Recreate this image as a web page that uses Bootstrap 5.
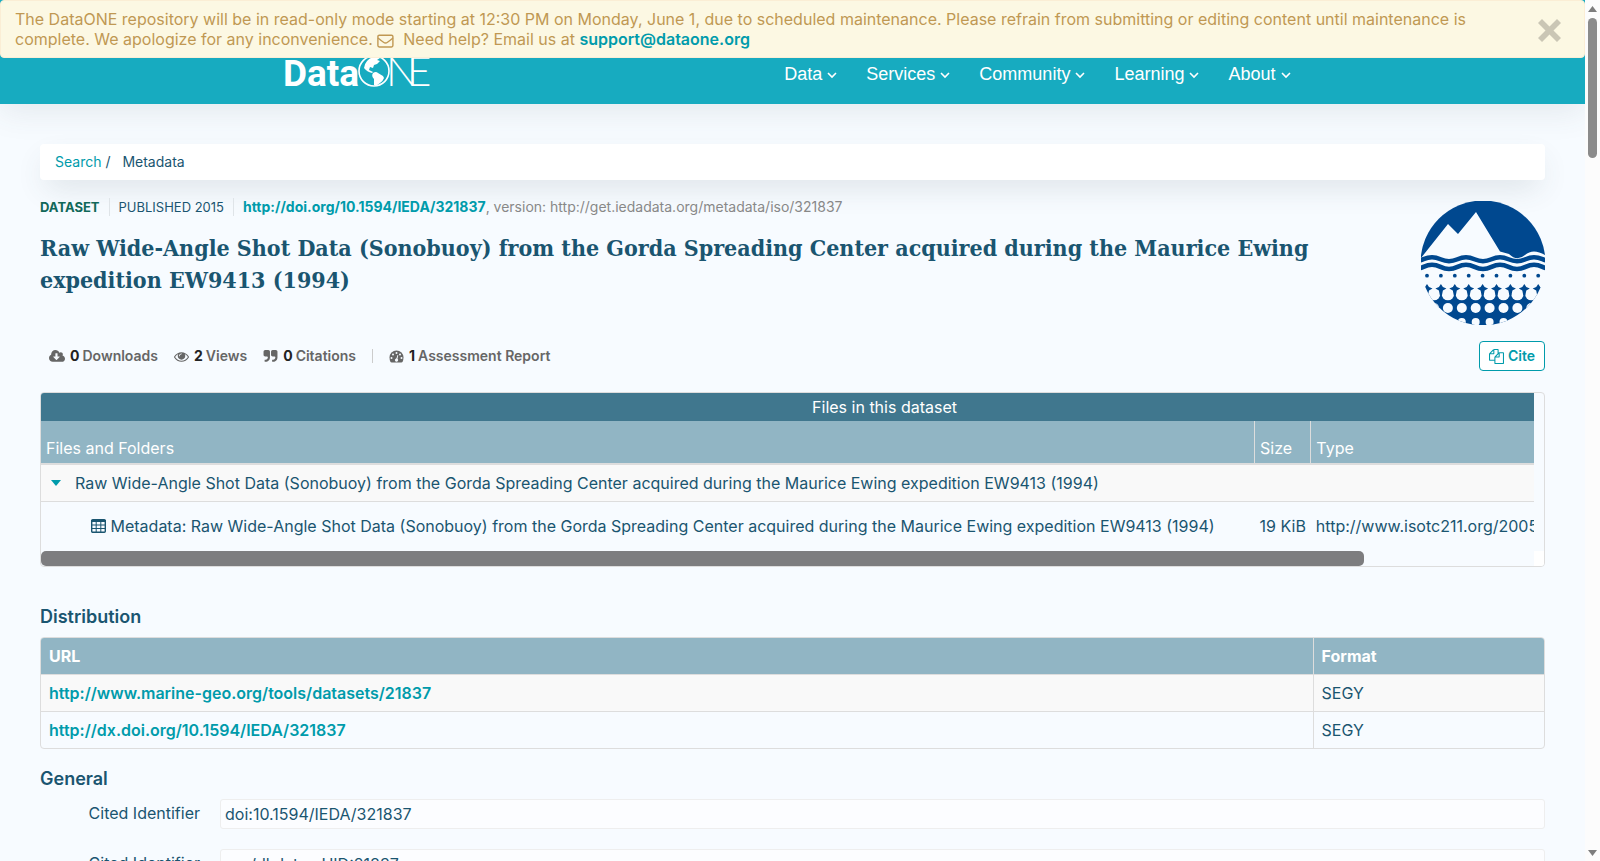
<!DOCTYPE html>
<html lang="en">
<head>
<meta charset="utf-8">
<meta name="viewport" content="width=device-width, initial-scale=1">
<title>Raw Wide-Angle Shot Data (Sonobuoy) | DataONE</title>
<link href="https://cdn.jsdelivr.net/npm/bootstrap@5.3.0/dist/css/bootstrap.min.css" rel="stylesheet">
<style>
:root{--ink:#1a5570;--teal:#009bab;--line:#ddd;--pale:#91b5c4}
body{background:#f7fbff;color:var(--ink);font-family:Inter,"Liberation Sans",sans-serif;font-size:16px;line-height:20px}
a{color:var(--teal);text-decoration:none}
svg{fill:currentColor}
.notice{background:#fcf8e3;border:1px solid #fbeed5;color:#c09853;padding:8px 48px 8px 14px;z-index:5;border-radius:4px}
.notice a{font-weight:600}
.notice .dismiss{right:22px;top:17px;line-height:0;color:#cac6b5}
.site-head{background:#17abc0;height:104px;padding-top:54px;box-shadow:0 8px 30px rgba(60,80,90,.1)}
.site-head .inner{width:1016px;max-width:100%;padding-right:10px}
.site-nav{font:18px/40px "Liberation Sans",sans-serif;gap:29px}
.site-nav a{color:#fff}
.content{padding:40px 40px 0}
.crumbs{background:#fff;border-radius:4px;padding:8px 15px;font-size:14px;box-shadow:0 12px 30px -6px rgba(60,80,90,.16)}
.meta{font-size:14px;margin-top:17px}
.meta .type{color:#116859;font-weight:700;font-size:13px}
.meta .year{font-size:13px}
.meta .sep{width:1px;height:18px;background:#dfe4e8;margin:0 9px}
.meta .ver{color:#888}
h1{font:700 23px/32px "DejaVu Serif Condensed","DejaVu Serif",serif;margin:15px 0 0}
.emblem{margin:21px 0 16px 80px}
.metrics{font-size:14px;font-weight:600;color:#666;padding-left:9px}
.metrics b{color:#222;font-weight:700;margin:0 3px 0 5px}
.metrics .sep{width:1px;height:14px;background:#ccc;margin:0 16px}
.cite{border:1px solid var(--teal);color:var(--teal);background:#fff;border-radius:4px;font-size:14px;font-weight:600;height:30px;padding:0 9px;line-height:20px}
.files{border:1px solid var(--line);border-radius:4px;margin-top:21px}
.files .clip{margin-right:10px}
.files table{white-space:nowrap;width:113%}
.files caption{caption-side:top;background:#40778e;color:#fff;text-align:center;padding:4px 0;height:28px}
.files th{background:var(--pale);color:#fff;font-weight:400;height:43px;padding:12px 5px 0;vertical-align:middle;border-bottom:2px solid var(--line)}
.files th:first-child{width:72%}
.files th:last-child{width:25%}
.files th+th{border-left:1px solid var(--line)}
.files .folder td{background:#f9f9f9;border-bottom:1px solid var(--line);height:37px;padding:0 10px}
.files .folder svg{fill:var(--teal);margin:0 14px 3px 0}
.files .entry td{height:50px;padding:0 5px}
.files .entry td:first-child{padding-left:50px}
.files .entry svg{fill:none;vertical-align:text-bottom;margin-bottom:3px}
.files .track{height:15px}
.files .thumb{width:88%;background:#7d7d7f;border-radius:5px}
.files .corner{width:10px;background:#fff}
h2{font-size:18px;line-height:20px;font-weight:600;margin:0 0 10px}
.files+h2{margin-top:40px}
.dist{border:1px solid var(--line);border-radius:4px;margin-bottom:20px}
.dist th{background:var(--pale);color:#fff;font-weight:700}
.dist th,.dist td{height:37px;padding:0 8px;vertical-align:middle}
.dist tbody td{border-top:1px solid var(--line)}
.dist thead th{height:36px}
.dist th+th,.dist td+td{border-left:1px solid var(--line);width:231px}
.dist tbody tr:first-child td{background:#f9f9f9}
.dist a{font-weight:600}
.attr{gap:20px;margin-bottom:20px}
.attr dt{width:160px;font-weight:400;padding-top:4px;text-align:right}
.attr dd{background:#fcfdff;border:1px solid #eee;border-radius:3px;height:30px;padding:4px;margin:0}
.rail{width:15px;background:#fcfcfc;color:#7d7d7d;padding:6px 0 5px}
.rail .grip{width:9px;background:#8b8b8b;border-radius:5px;height:140px;margin-top:6px}
</style>
</head>
<body class="d-flex vh-100 overflow-hidden">
<div class="flex-grow-1 position-relative overflow-hidden" style="min-width:0">
  <div class="notice position-absolute top-0 start-0 w-100">
    The DataONE repository will be in read-only mode starting at 12:30 PM on Monday, June 1, due to scheduled maintenance. Please refrain from submitting or editing content until maintenance is complete. We apologize for any inconvenience.
    <svg width="17" height="14" viewBox="0 0 17 14" style="fill:none" stroke="currentColor" stroke-width="1.4"><rect x=".9" y="1.2" width="15" height="11.8" rx="1.4"/><path d="M1 4q3 2.500 5.500 4.300 2 1.500 4 0 2.500-1.800 5.500-4.300"/></svg>
    &nbsp;Need help? Email us at <a href="#">support@dataone.org</a>
    <button class="dismiss btn p-0 border-0 position-absolute" aria-label="Close"><svg width="25" height="25" viewBox="0 0 25 25"><path d="M5 1l7.500 7.500L20 1l4 4-7.500 7.500L24 20l-4 4-7.500-7.500L5 24l-4-4 7.500-7.500L1 5z"/></svg></button>
  </div>
  <header class="site-head">
    <div class="inner mx-auto d-flex justify-content-between">
      <a href="#" class="text-white" aria-label="DataONE"><svg width="150" height="40" viewBox="0 0 150 40" overflow="visible">
        <text x="-2" y="32" font-family="Roboto, sans-serif" font-weight="700" font-size="37">Data</text>
        <circle cx="89" cy="17" r="15" fill="#17abc0" stroke="#fff" stroke-width="1.600"/>
        <path d="M79 14q1-8 9-11l7 1-3 2 3 1-3 3-3 1-1 3-3-1-1 3 4 2-1 1q-5-1-8-5zM88 19q3-2 5 0l5 3 1 2q-1 3-4 5l-4 3-2-1v-6q-3-3-1-6z"/>
        <text x="101" y="32" font-family="Lato" font-weight="300" font-size="42">N</text>
        <text x="122" y="32" font-family="Lato" font-weight="300" font-size="42">E</text></svg></a>
      <nav class="site-nav d-flex">
        <a href="#">Data <svg width="10" height="7" viewBox="0 0 10 7"><path d="M1 1l4 4 4-4" fill="none" stroke="#fff" stroke-width="1.600"/></svg></a>
        <a href="#">Services <svg width="10" height="7" viewBox="0 0 10 7"><path d="M1 1l4 4 4-4" fill="none" stroke="#fff" stroke-width="1.600"/></svg></a>
        <a href="#">Community <svg width="10" height="7" viewBox="0 0 10 7"><path d="M1 1l4 4 4-4" fill="none" stroke="#fff" stroke-width="1.600"/></svg></a>
        <a href="#">Learning <svg width="10" height="7" viewBox="0 0 10 7"><path d="M1 1l4 4 4-4" fill="none" stroke="#fff" stroke-width="1.600"/></svg></a>
        <a href="#">About <svg width="10" height="7" viewBox="0 0 10 7"><path d="M1 1l4 4 4-4" fill="none" stroke="#fff" stroke-width="1.600"/></svg></a>
      </nav>
    </div>
  </header>
  <main class="content">
    <nav class="crumbs"><a href="#">Search</a> <span class="me-2">/</span> <span>Metadata</span></nav>
    <div class="d-flex justify-content-between">
      <div>
        <div class="meta d-flex align-items-center"><span class="type">DATASET</span><span class="sep"></span><span class="year">PUBLISHED 2015</span><span class="sep"></span><a href="#" class="fw-bold">http://doi.org/10.1594/IEDA/321837</a><span class="ver">, version: http://get.iedadata.org/metadata/iso/321837</span></div>
        <h1>Raw Wide-Angle Shot Data (Sonobuoy) from the Gorda Spreading Center acquired during the Maurice Ewing expedition EW9413 (1994)</h1>
      </div>
      <svg class="emblem flex-shrink-0" width="124" height="124" viewBox="0 0 124 124" aria-hidden="true">
        <defs><clipPath id="disc"><circle cx="62" cy="62" r="62.500"/></clipPath></defs>
        <g clip-path="url(#disc)" fill="#00488f">
          <path d="M0 0h124v54Q112 47 104 54T88 53L79 50.500 55 11 37 33 27 23 0 57z"/>
          <g fill="none" stroke="#00488f" stroke-width="4.600">
            <path d="M-6 60C2 60 3 56.300 11 56.300S20 60.200 28 60.200 37 56.300 45 56.300 54 60.200 62 60.200 71 56.300 79 56.300 88 60.200 96 60.200 105 56.300 113 56.300 122 60 130 60"/>
            <path d="M-6 68C2 68 3 63.800 11 63.800S20 68 28 68 37 63.800 45 63.800 54 68 62 68 71 63.800 79 63.800 88 68 96 68 105 63.800 113 63.800 122 68 130 68"/>
          </g>
          <g id="dots"></g>
        </g>
      </svg>
    </div>
    <div class="d-flex justify-content-between align-items-center">
      <div class="metrics d-flex align-items-center">
        <svg width="16" height="15" viewBox="0 0 1920 1792"><path d="M1280 928q0-14-9-23t-23-9h-224v-352q0-13-9.500-22.500t-22.500-9.500h-192q-13 0-22.500 9.500t-9.500 22.500v352h-224q-13 0-22.500 9.500t-9.500 22.500q0 14 9 23l352 352q9 9 23 9t23-9l351-351q10-12 10-24zm640 224q0 159-112.500 271.500t-271.500 112.500h-1088q-185 0-316.500-131.500t-131.500-316.500q0-130 70-240t188-165q-2-30-2-43 0-212 150-362t362-150q156 0 285.500 87t188.500 231q71-62 166-62 106 0 181 75t75 181q0 76-41 138 130 31 213.500 135.500t83.500 238.500z"/></svg><b>0</b>Downloads
        <svg class="ms-3" width="15" height="15" viewBox="0 0 1792 1792"><path d="M1664 960q-152-236-381-353 61 104 61 225 0 185-131.500 316.500t-316.500 131.500-316.500-131.500-131.500-316.500q0-121 61-225-229 117-381 353 133 205 333.500 326.500t434.500 121.500 434.500-121.500 333.500-326.500zm-720-384q0-20-14-34t-34-14q-125 0-214.500 89.500t-89.500 214.500q0 20 14 34t34 14 34-14 14-34q0-86 61-147t147-61q20 0 34-14t14-34zm848 384q0 34-20 69-140 230-376.500 368.500t-499.500 138.500-499.500-139-376.500-368q-20-35-20-69t20-69q140-229 376.500-368t499.500-139 499.500 139 376.500 368q20 35 20 69z"/></svg><b>2</b>Views
        <svg class="ms-3" width="15" height="15" viewBox="0 0 1792 1792"><path id="q" d="M832 320v704q0 104-40.500 198.500t-109.500 163.500-163.500 109.500-198.500 40.500h-64q-26 0-45-19t-19-45v-128q0-26 19-45t45-19h64q106 0 181-75t75-181v-32q0-40-28-68t-68-28h-224q-80 0-136-56t-56-136v-384q0-80 56-136t136-56h384q80 0 136 56t56 136z"/><use href="#q" x="896"/></svg><b>0</b>Citations
        <span class="sep"></span>
        <svg width="15" height="13" viewBox="0 0 30 26"><path d="M15 1a14 14 0 0 0-14 14q0 5 2 9l2 1h20l2-1q2-4 2-9A14 14 0 0 0 15 1z"/><g style="fill:#f7fbff"><circle cx="5" cy="16" r="2"/><circle cx="8" cy="9" r="2"/><circle cx="15" cy="6" r="2"/><circle cx="22" cy="9" r="2"/><circle cx="25" cy="16" r="2"/><path d="M17 10l1.500.500-1.500 7q2 2 1 4-1 2-3 2t-3-2q-1-4 3-5z"/></g></svg><b>1</b>Assessment Report
      </div>
      <button class="cite d-flex align-items-center gap-1"><svg width="15" height="15" viewBox="0 0 1792 1792"><path d="M1696 384q40 0 68 28t28 68v1216q0 40-28 68t-68 28h-960q-40 0-68-28t-28-68v-288h-544q-40 0-68-28t-28-68v-672q0-40 20-88t48-76l408-408q28-28 76-48t88-20h416q40 0 68 28t28 68v328q68-40 128-40h416zm-544 213l-299 299h299v-299zm-640-384l-299 299h299v-299zm196 647l316-316v-416h-384v416q0 40-28 68t-68 28h-416v640h512v-256q0-40 20-88t48-76zm956 804v-1152h-384v416q0 40-28 68t-68 28h-416v640h896z"/></svg>Cite</button>
    </div>
    <section class="files overflow-hidden">
      <div class="clip overflow-hidden">
        <table>
          <caption>Files in this dataset</caption>
          <thead><tr><th>Files and Folders</th><th>Size</th><th>Type</th></tr></thead>
          <tbody>
            <tr class="folder"><td colspan="3"><svg width="10" height="6" viewBox="0 0 10 6"><path d="M0 0h10L5 6z"/></svg>Raw Wide-Angle Shot Data (Sonobuoy) from the Gorda Spreading Center acquired during the Maurice Ewing expedition EW9413 (1994)</td></tr>
            <tr class="entry"><td><svg width="15" height="14" viewBox="0 0 15 14" stroke="currentColor"><rect x=".7" y=".7" width="13.600" height="12.600" rx="1" stroke-width="1.400"/><path d="M0 2h15" stroke-width="2"/><path d="M1 6h13M1 9.500h13M5.200 2v11M9.800 2v11"/></svg> Metadata: Raw Wide-Angle Shot Data (Sonobuoy) from the Gorda Spreading Center acquired during the Maurice Ewing expedition EW9413 (1994)</td><td>19 KiB</td><td>http://www.isotc211.org/2005/gmd</td></tr>
          </tbody>
        </table>
      </div>
      <div class="track d-flex justify-content-between"><div class="thumb"></div><div class="corner"></div></div>
    </section>
    <h2>Distribution</h2>
    <div class="dist overflow-hidden">
      <table class="w-100">
        <thead><tr><th>URL</th><th>Format</th></tr></thead>
        <tbody>
          <tr><td><a href="#">http://www.marine-geo.org/tools/datasets/21837</a></td><td>SEGY</td></tr>
          <tr><td><a href="#">http://dx.doi.org/10.1594/IEDA/321837</a></td><td>SEGY</td></tr>
        </tbody>
      </table>
    </div>
    <h2>General</h2>
    <dl class="m-0">
      <div class="attr d-flex"><dt>Cited Identifier</dt><dd class="flex-grow-1">doi:10.1594/IEDA/321837</dd></div>
      <div class="attr d-flex"><dt>Cited Identifier</dt><dd class="flex-grow-1">urn/dl:data.uUID:21837</dd></div>
    </dl>
  </main>
</div>
<div class="rail vh-100 d-flex flex-column align-items-center flex-shrink-0">
  <svg width="9" height="6" viewBox="0 0 9 6"><path d="M0 6h9L4.500 0z"/></svg>
  <div class="grip"></div>
  <svg class="mt-auto" width="9" height="6" viewBox="0 0 9 6"><path d="M0 0h9L4.500 6z"/></svg>
</div>
<script>
// Seabed pattern of the repository emblem: rows of marks that grow with depth.
const g=document.getElementById('dots');let s='<rect y="93" width="124" height="32"/>';
for(let i=-1;i<10;i++){const x=13+i*13.900;s+=`<circle cx="${x}" cy="93" r="6.300" fill="#f7fbff"/><circle cx="${x}" cy="107" r="5" fill="#f7fbff"/><circle cx="${x}" cy="121" r="4" fill="#f7fbff"/>`}
for(let i=0;i<9;i++){const x=6+i*13.900;s+=`<circle cx="${x}" cy="74.700" r="1.900"/><path d="M${x} 83l2 3 3.500 1.500-3.500 2-1 5h-2l-1-5-3.500-2 3.500-1.500z"/>`}
g.innerHTML=s;
</script>
<script src="https://cdn.jsdelivr.net/npm/bootstrap@5.3.0/dist/js/bootstrap.bundle.min.js"></script>
</body>
</html>
